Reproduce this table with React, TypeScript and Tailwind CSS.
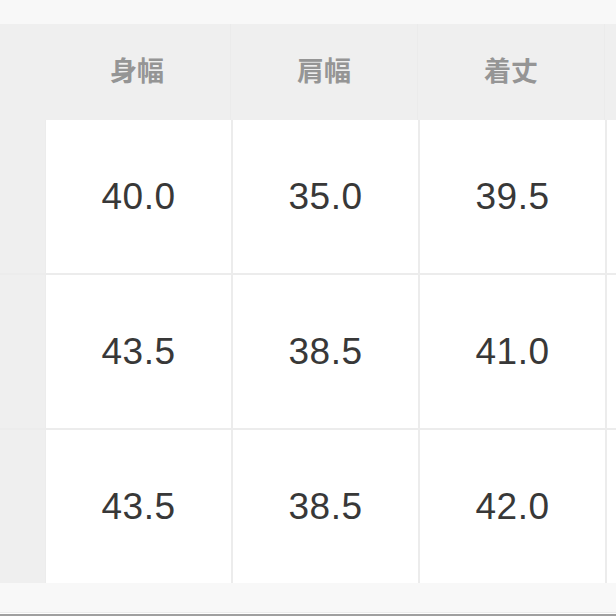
const headers = ["身幅", "肩幅", "着丈"];
const rows = [
  ["40.0", "35.0", "39.5"],
  ["43.5", "38.5", "41.0"],
  ["43.5", "38.5", "42.0"],
];

export default function App() {
  return (
    <div className="w-[616px] h-[616px] overflow-hidden bg-[#f8f8f8] flex flex-col font-['Liberation_Sans','Noto_Sans_CJK_JP',sans-serif]">
      <div className="h-[24px] shrink-0 bg-[#f8f8f8]" />
      {/* header */}
      <div className="h-[96px] shrink-0 bg-[#efefef] grid grid-cols-[44px_187px_187px_187px_1fr]">
        <div />
        {headers.map((h) => (
          <div
            key={h}
            className="flex items-center justify-center text-[27px] font-bold text-[#959595] border-r border-[#ebebeb]"
          >
            {h}
          </div>
        ))}
        <div />
      </div>
      {/* body */}
      <div className="shrink-0 bg-[#ececec] grid grid-cols-[44px_185px_185px_185px_1fr] gap-[2px]">
        {rows.map((r, i) => (
          <div key={i} className="contents">
            <div className="h-[153px] bg-[#efefef] -mr-[1px]" />
            {r.map((v, j) => (
              <div
                key={j}
                className="h-[153px] bg-white flex items-center justify-center text-[37px] text-[#383838] tracking-[0.5px]"
              >
                {v}
              </div>
            ))}
            <div className="h-[153px] bg-white" />
          </div>
        ))}
      </div>
      <div className="h-[29px] shrink-0 bg-[#f8f8f8]" />
      <div className="h-[1px] shrink-0 bg-[#ececec]" />
      <div className="h-[1px] shrink-0 bg-white" />
      <div className="flex-1 bg-[#a0a0a0]" />
    </div>
  );
}
